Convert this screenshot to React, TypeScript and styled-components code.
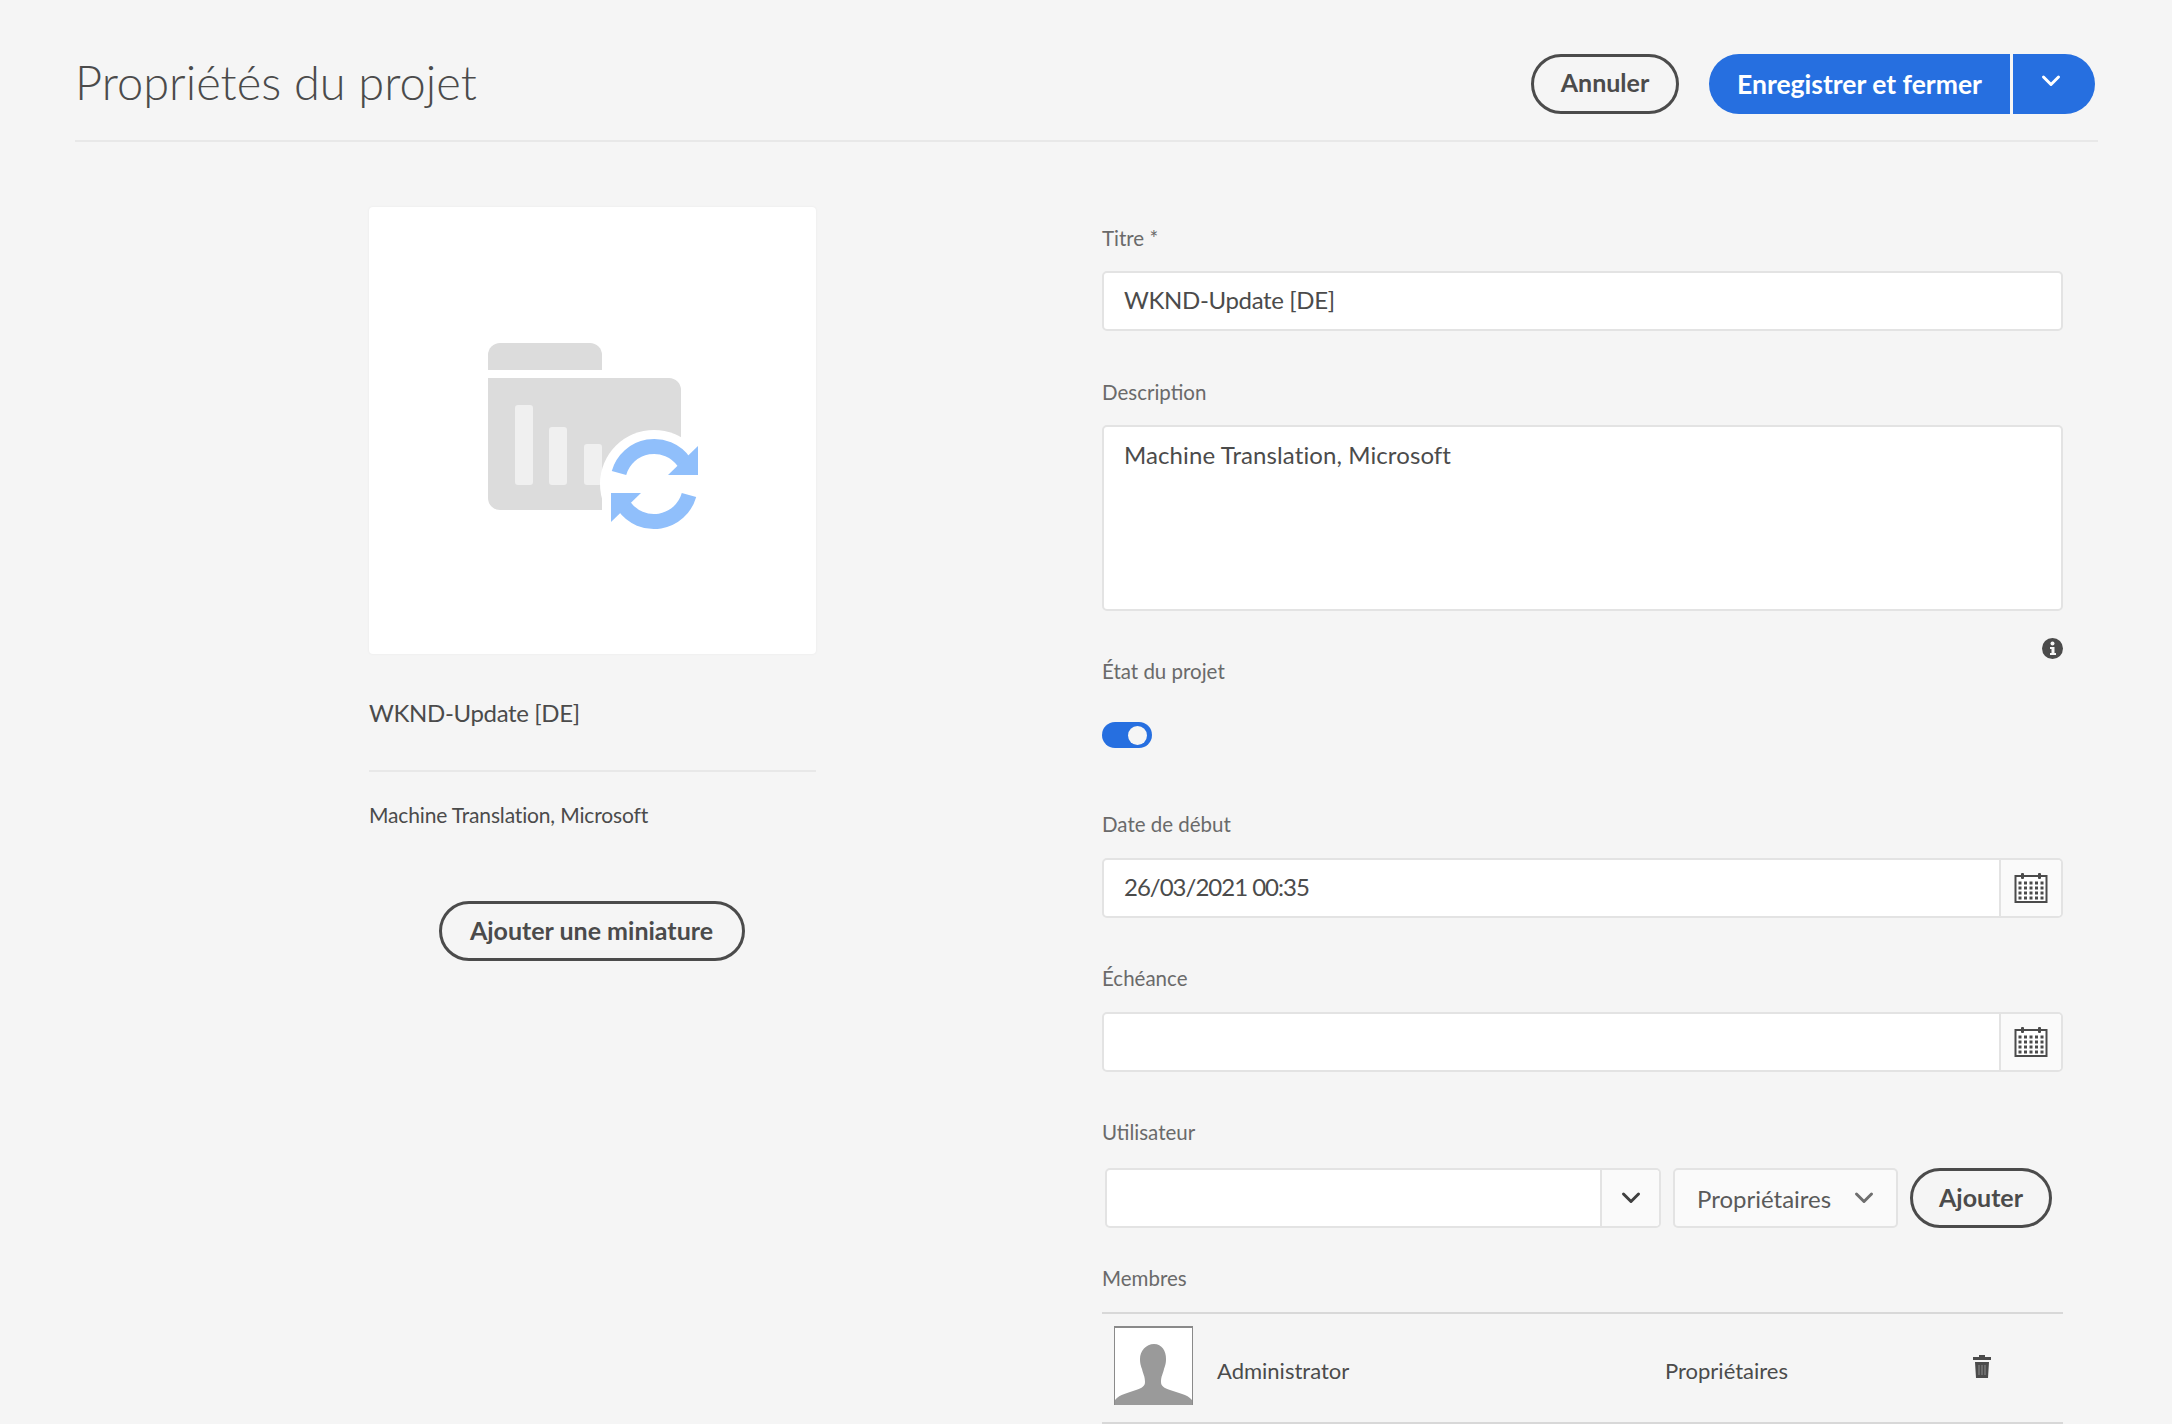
import React from 'react';
import styled, { createGlobalStyle } from 'styled-components';

const App: React.FC = () => {
  return (
    <React.Fragment>
      <GlobalStyle />
      <Page>
        <Header>
          <Title>Propriétés du projet</Title>
          <Actions>
            <OutlineButton>Annuler</OutlineButton>
            <SplitButton>
              <SaveButton>Enregistrer et fermer</SaveButton>
              <SaveMenuButton><Chevron color="#fff" /></SaveMenuButton>
            </SplitButton>
          </Actions>
        </Header>

        <Main>
          <Summary>
            <Thumbnail><ProjectIcon /></Thumbnail>
            <SummaryName>WKND-Update [DE]</SummaryName>
            <SummaryDescription>Machine Translation, Microsoft</SummaryDescription>
            <ThumbnailAction>
              <OutlineButton $width={306}>Ajouter une miniature</OutlineButton>
            </ThumbnailAction>
          </Summary>

          <Form>
            <Label>Titre *</Label>
            <TextField $after={46} $spacing={-0.35}>WKND-Update [DE]</TextField>

            <Label>Description</Label>
            <TextArea $spacing={0.1}>Machine Translation, Microsoft</TextArea>

            <InfoRow><InfoIcon /></InfoRow>
            <Label $gap={36}>État du projet</Label>
            <Toggle><ToggleKnob /></Toggle>

            <Label $gap={19}>Date de début</Label>
            <DateField $after={45}>
              <DateValue>26/03/2021 00:35</DateValue>
              <AddonButton $width={60}><CalendarIcon /></AddonButton>
            </DateField>

            <Label $gap={19}>Échéance</Label>
            <DateField $after={45}>
              <DateValue />
              <AddonButton $width={60}><CalendarIcon /></AddonButton>
            </DateField>

            <Label $gap={21}>Utilisateur</Label>
            <UserRow>
              <UserCombo>
                <DateValue />
                <AddonButton $width={57}><Chevron color="#3f3f3f" /></AddonButton>
              </UserCombo>
              <RoleSelect>
                Propriétaires
                <Chevron color="#6e6e6e" />
              </RoleSelect>
              <OutlineButton $width={142}>Ajouter</OutlineButton>
            </UserRow>

            <Label $gap={19}>Membres</Label>
            <MemberRow>
              <Avatar><AvatarIcon /></Avatar>
              <MemberName>Administrator</MemberName>
              <MemberRole>Propriétaires</MemberRole>
              <TrashIcon />
            </MemberRow>
          </Form>
        </Main>
      </Page>
    </React.Fragment>
  );
};

export default App;

const Chevron = ({ color }: { color: string }) => (
  <svg width="20" height="14" viewBox="0 0 20 14" fill="none">
    <path d="M2.5 3 L10 10.5 L17.5 3" stroke={color} strokeWidth="3" strokeLinecap="round" strokeLinejoin="round" />
  </svg>
);

const ProjectIcon = () => (
  <svg width="219" height="201" viewBox="143 140 219 201">
    <path d="M148 180V165a12 12 0 0 1 12-12H250a12 12 0 0 1 12 12V180Z" fill="#dcdcdc" />
    <path d="M148 188H329a12 12 0 0 1 12 12V290H262V320H160a12 12 0 0 1-12-12Z" fill="#dcdcdc" />
    <rect x="175" y="215" width="18" height="80" rx="3" fill="#f0f0f0" />
    <rect x="209" y="237" width="18" height="58" rx="3" fill="#f0f0f0" />
    <rect x="244" y="254" width="18" height="41" rx="3" fill="#f0f0f0" />
    <circle cx="314" cy="294" r="54" fill="#fff" />
    <path d="M279 283A36.500 36.500 0 0 1 344 272" fill="none" stroke="#90bffb" strokeWidth="15" />
    <path d="M358 256V285H328Z" fill="#90bffb" />
    <path d="M349 305A36.500 36.500 0 0 1 284 316" fill="none" stroke="#90bffb" strokeWidth="15" />
    <path d="M271 303H301L271 332Z" fill="#90bffb" />
  </svg>
);

const InfoIcon = () => (
  <svg width="21" height="21" viewBox="0 0 21 21">
    <circle cx="10.500" cy="10.500" r="10.500" fill="#4b4b4b" />
    <circle cx="10.500" cy="5.500" r="2" fill="#f5f5f5" />
    <path d="M8 9H12.500V15H14V17H8V15H9.500V11H8Z" fill="#f5f5f5" />
  </svg>
);

const CalendarIcon = () => (
  <svg width="34" height="32" viewBox="0 0 34 32">
    <rect x="1.500" y="4" width="31" height="26" fill="#fff" stroke="#4b4b4b" strokeWidth="2" />
    <rect x="7" y="1" width="3" height="6" rx="1" fill="#4b4b4b" />
    <rect x="24" y="1" width="3" height="6" rx="1" fill="#4b4b4b" />
    {[11, 16, 21, 26].map(y =>
      [6, 11.500, 17, 22.500, 28].map(x => (
        <rect key={`${x}-${y}`} x={x - 1.500} y={y - 1.500} width="3" height="3" fill="#4b4b4b" />
      ))
    )}
  </svg>
);

const AvatarIcon = () => (
  <svg width="77" height="77" viewBox="0 0 77 77">
    <path d="M39 16c8 0 12 7 12 15 0 5-1 7-2 10-1 5-3 7-3 13 0 4 3 6 9 8 8 3 17 4 22 10v5H0v-5c5-6 13-7 21-10 6-2 9-4 9-8 0-6-2-8-3-13-1-3-2-5-2-10 0-8 6-15 14-15Z" fill="#9a9a9a" />
  </svg>
);

const TrashIcon = () => (
  <TrashSlot>
    <svg width="20" height="23" viewBox="0 0 20 23">
      <path d="M7 0H13V2H19V5H1V2H7Z" fill="#4b4b4b" />
      <path d="M3 7H17L16 23H4Z" fill="#4b4b4b" />
      <path d="M7 10V20M10 10V20M13 10V20" stroke="#8e8e8e" strokeWidth="1" />
    </svg>
  </TrashSlot>
);

const GlobalStyle = createGlobalStyle`
  html, body {
    margin: 0;
    padding: 0;
    background: #f5f5f5;
    height: 1424px;
    overflow: hidden;
  }
  body {
    font-family: Lato, "Noto Sans", sans-serif;
    color: #4b4b4b;
  }
`;

const Page = styled.div`
  width: 2172px;
  height: 1424px;
  padding: 55px 74px 0 75px;
  box-sizing: border-box;
  overflow: hidden;
`;

const Header = styled.header`
  display: flex;
  align-items: center;
  justify-content: space-between;
  height: 87px;
  padding: 0 3px 28px 0;
  box-sizing: border-box;
  border-bottom: 2px solid #e8e8e8;
`;

const Title = styled.h1`
  margin: 0;
  padding-bottom: 3px;
  font-size: 47px;
  font-weight: 300;
  line-height: 59px;
  color: #4b4b4b;
`;

const Actions = styled.div`
  display: flex;
  gap: 30px;
`;

const OutlineButton = styled.button<{ $width?: number }>`
  width: ${props => props.$width || 148}px;
  height: 60px;
  padding: 0 0 3px;
  background: transparent;
  border: 3px solid #4b4b4b;
  border-radius: 30px;
  font-family: inherit;
  font-size: 25px;
  font-weight: 700;
  color: #4b4b4b;
`;

const SplitButton = styled.div`
  display: flex;
  gap: 3px;
`;

const SaveButton = styled.button`
  width: 301px;
  height: 60px;
  padding: 0;
  border: none;
  border-radius: 30px 0 0 30px;
  background: #266fe0;
  font-family: inherit;
  font-size: 26.500px;
  font-weight: 700;
  color: #fff;
`;

const SaveMenuButton = styled.button`
  width: 82px;
  height: 60px;
  padding: 0 6px 2px 0;
  border: none;
  border-radius: 0 30px 30px 0;
  background: #266fe0;
`;

const Main = styled.main`
  display: flex;
  gap: 286px;
  padding: 65px 0 0 294px;
`;

const Summary = styled.section`
  width: 447px;
  flex-shrink: 0;
`;

const Thumbnail = styled.div`
  display: flex;
  align-items: center;
  justify-content: center;
  width: 447px;
  height: 447px;
  background: #fff;
  border-radius: 4px;
  box-shadow: 0 0 2px #e6e6e6;
`;

const SummaryName = styled.div`
  height: 118px;
  padding-top: 44px;
  box-sizing: border-box;
  font-size: 24px;
  line-height: 30px;
  letter-spacing: -0.35px;
  border-bottom: 2px solid #e8e8e8;
`;

const SummaryDescription = styled.div`
  margin-top: 29px;
  font-size: 21px;
  line-height: 28px;
  letter-spacing: -0.15px;
`;

const ThumbnailAction = styled.div`
  display: flex;
  justify-content: center;
  margin-top: 72px;
  padding-right: 2px;
`;

const Form = styled.section`
  width: 961px;
  padding-top: 16px;
`;

const Label = styled.div<{ $gap?: number }>`
  height: 30px;
  margin-bottom: ${props => props.$gap ?? 18}px;
  font-size: 20.500px;
  line-height: 30px;
  color: #6a6a6a;
`;

const TextField = styled.div<{ $after?: number; $spacing?: number }>`
  height: 60px;
  margin-bottom: ${props => props.$after ?? 0}px;
  padding: 0 20px;
  box-sizing: border-box;
  background: #fff;
  border: 2px solid #e3e3e3;
  border-radius: 5px;
  font-size: 24px;
  line-height: 54px;
  letter-spacing: ${props => props.$spacing ?? 0}px;
`;

const TextArea = styled(TextField)`
  height: 186px;
  line-height: 56px;
`;

const InfoRow = styled.div`
  display: flex;
  justify-content: flex-end;
  margin: 27px 0 -3px;
`;

const Toggle = styled.div`
  display: flex;
  align-items: center;
  justify-content: flex-end;
  width: 50px;
  height: 26px;
  margin-bottom: 61px;
  padding-right: 5px;
  box-sizing: border-box;
  background: #266fe0;
  border-radius: 13px;
`;

const ToggleKnob = styled.div`
  width: 19px;
  height: 19px;
  background: #f5f5f5;
  border-radius: 50%;
`;

const DateField = styled.div<{ $after?: number }>`
  display: flex;
  height: 60px;
  margin-bottom: ${props => props.$after ?? 0}px;
  box-sizing: border-box;
  background: #fff;
  border: 2px solid #e3e3e3;
  border-radius: 5px;
`;

const DateValue = styled.div`
  flex: 1;
  padding: 0 20px;
  font-size: 24px;
  line-height: 54px;
  letter-spacing: -1px;
`;

const AddonButton = styled.div<{ $width: number }>`
  display: flex;
  align-items: center;
  justify-content: center;
  flex-shrink: 0;
  width: ${props => props.$width}px;
  background: #fafafa;
  border-left: 2px solid #e3e3e3;
  border-radius: 0 4px 4px 0;
`;

const UserRow = styled.div`
  display: flex;
  align-items: center;
  margin-bottom: 35px;
  padding-left: 3px;
`;

const UserCombo = styled(DateField)`
  width: 556px;
  margin-right: 12px;
`;

const RoleSelect = styled.div`
  display: flex;
  align-items: center;
  justify-content: space-between;
  width: 225px;
  height: 60px;
  margin-right: 12px;
  padding: 0 22px;
  box-sizing: border-box;
  background: #fafafa;
  border: 2px solid #e3e3e3;
  border-radius: 5px;
  font-size: 24px;
  color: #5a5a5a;
`;

const MemberRow = styled.div`
  display: flex;
  align-items: center;
  height: 112px;
  padding: 0 0 6px 12px;
  box-sizing: border-box;
  border-top: 2px solid #d8d8d8;
  border-bottom: 2px solid #d8d8d8;
`;

const Avatar = styled.div`
  display: flex;
  width: 79px;
  height: 79px;
  margin-right: 24px;
  box-sizing: border-box;
  background: #fff;
  border: 1px solid #8a8a8a;
  border-top-width: 2px;
`;

const MemberName = styled.div`
  width: 448px;
  padding-top: 10px;
  font-size: 22px;
`;

const MemberRole = styled.div`
  width: 307px;
  padding-top: 10px;
  font-size: 22px;
`;

const TrashSlot = styled.div`
  display: flex;
  margin-top: 2px;
`;
